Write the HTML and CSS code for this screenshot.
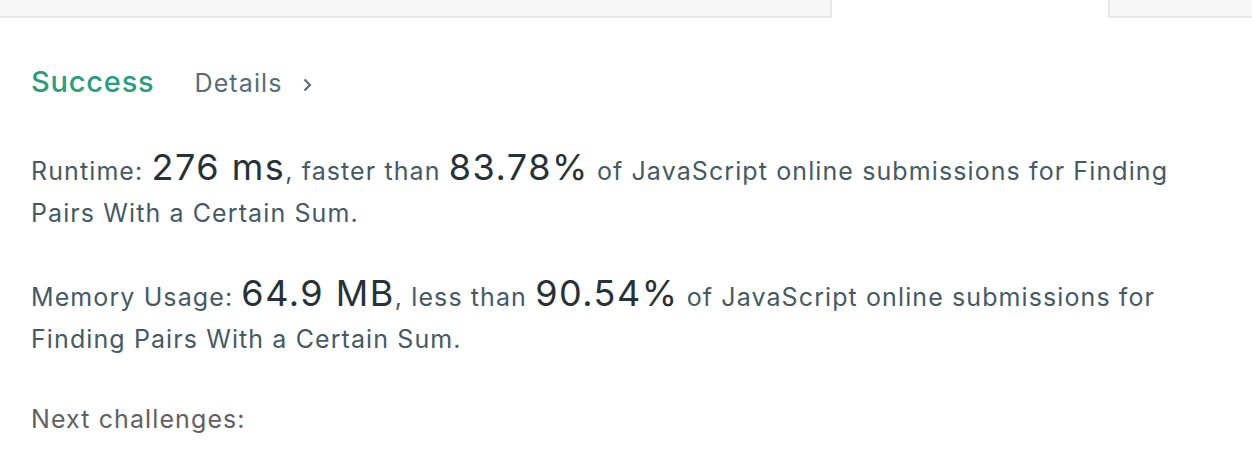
FILE: index.html
```html
<!DOCTYPE html>
<html lang="en">
<head>
  <meta charset="UTF-8">
  <title>Submission Result</title>
  <meta name="viewport" content="width=device-width, initial-scale=1.0">
  <link rel="stylesheet" href="styles.css">
</head>
<body>
  <div class="tabs">
    <div class="tab"></div>
    <div class="tab active"></div>
    <div class="tab"></div>
  </div>
  <main class="result">
    <div class="status">
      <span class="success">Success</span>
      <a class="details" href="#">Details
        <svg class="chevron" width="9" height="14" viewBox="0 0 9 14"><path d="M1.5 1.5 L7 7 L1.5 12.5" fill="none" stroke="currentColor" stroke-width="2.2"/></svg>
      </a>
    </div>
    <p class="stat">Runtime: <span class="big">276 ms</span>, faster than <span class="big">83.78%</span> of JavaScript online submissions for Finding Pairs With a Certain Sum.</p>
    <p class="stat">Memory Usage: <span class="big">64.9 MB</span>, less than <span class="big">90.54%</span> of JavaScript online submissions for Finding Pairs With a Certain Sum.</p>
    <p class="next">Next challenges:</p>
  </main>
</body>
</html>
```

FILE: styles.css
```css
body { margin: 0; background: #fff; font-family: Inter, "Noto Sans", sans-serif; color: #455a64; }
.tabs { display: flex; height: 18px; }
.tab { background: #f7f7f7; border-bottom: 2px solid #e8e8e8; height: 16px; }
.tab:first-child { width: 830px; border-right: 2px solid #e8e8e8; }
.tab.active { width: 276px; background: #fff; border-bottom-color: #fff; }
.tab:last-child { flex: 1; border-left: 2px solid #e8e8e8; }
.result { padding: 0 52px 0 31px; }
.status { display: flex; align-items: baseline; margin-top: 46px; height: 40px; }
.success { color: #2a9d7f; font-size: 29px; font-weight: 500; letter-spacing: 0.8px; }
.details { color: #546e7a; font-size: 25px; letter-spacing: 1.1px; text-decoration: none; margin-left: 40px; }
.chevron { margin-left: 12px; }
.stat { font-size: 25px; letter-spacing: 1.1px; line-height: 42px; margin: 42px 0 0; }
.stat + .stat { margin-top: 38px; }
.big { font-size: 36px; letter-spacing: 1.5px; color: #263238; line-height: 42px; }
.next { font-size: 25px; letter-spacing: 1.1px; color: #616161; margin: 38px 0 0; line-height: 42px; }
```
